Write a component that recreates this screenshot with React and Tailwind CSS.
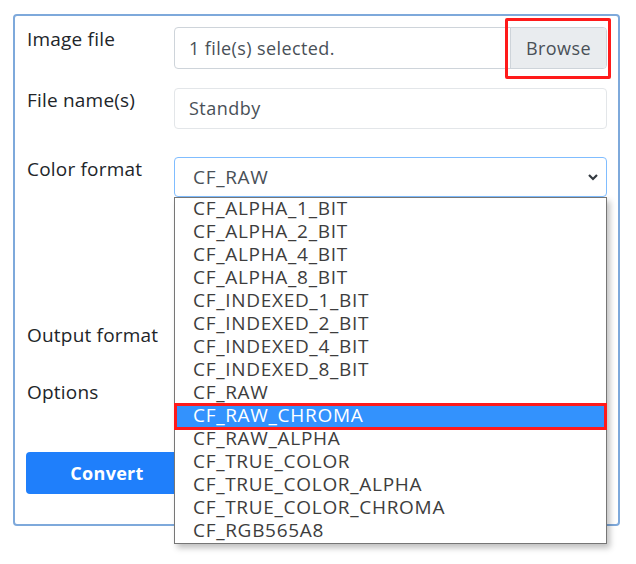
import React from "react";

const items = [
  "CF_ALPHA_1_BIT",
  "CF_ALPHA_2_BIT",
  "CF_ALPHA_4_BIT",
  "CF_ALPHA_8_BIT",
  "CF_INDEXED_1_BIT",
  "CF_INDEXED_2_BIT",
  "CF_INDEXED_4_BIT",
  "CF_INDEXED_8_BIT",
  "CF_RAW",
  "CF_RAW_CHROMA",
  "CF_RAW_ALPHA",
  "CF_TRUE_COLOR",
  "CF_TRUE_COLOR_ALPHA",
  "CF_TRUE_COLOR_CHROMA",
  "CF_RGB565A8",
];

export default function App() {
  return (
    <div className="w-[636px] h-[564px] bg-white pt-[14px] pl-[13px]" style={{ fontFamily: '"Open Sans", "Liberation Sans", sans-serif' }}>
      <div className="w-[607px] h-[512px] border-2 border-[#7ea9db] rounded-[4px] pl-[12px] pr-[11px] pt-[11px]">
        {/* Row 1 */}
        <div className="flex">
          <div className="w-[147px] text-[19px] leading-[24px] tracking-[0.2px] text-[#212529]">Image file</div>
          <div className="flex-1 flex h-[42px] border border-[#ced4da] rounded-[4px]">
            <div className="flex-1 flex items-center pl-[14px] text-[18px] tracking-[0.4px] text-[#495057]">1 file(s) selected.</div>
            <div className="relative w-[96px] flex items-center justify-center bg-[#e9ecef] border-l border-[#ced4da] rounded-r-[3px] text-[18px] tracking-[0.4px] text-[#495057]">
              Browse
              <div className="absolute -left-[6px] -top-[10px] -right-[5px] -bottom-[11px] border-[3px] border-[#ff1a1a] rounded-[2px]" />
            </div>
          </div>
        </div>
        {/* Row 2 */}
        <div className="flex mt-[19px]">
          <div className="w-[147px] text-[19px] leading-[24px] tracking-[0.2px] text-[#212529]">File name(s)</div>
          <div className="flex-1 flex items-center h-[41px] border border-[#e3e6e9] rounded-[4px] pl-[14px] text-[18px] tracking-[0.5px] text-[#495057]">Standby</div>
        </div>
        {/* Row 3 */}
        <div className="flex mt-[28px]">
          <div className="w-[147px] text-[19px] leading-[24px] tracking-[0.2px] text-[#212529]">Color format</div>
          <div className="relative flex-1">
            <div className="flex items-center justify-between h-[40px] border border-[#80bdff] rounded-[4px] pl-[18px] pr-[6px] text-[19px] tracking-[0.7px] text-[#495057]">
              <span>CF_RAW</span>
              <svg width="12" height="8" viewBox="0 0 12 8" className="mr-[1px]">
                <path d="M2 2 L6 6 L10 2" stroke="#343a40" strokeWidth="2.2" fill="none" />
              </svg>
            </div>
            <div className="absolute left-0 right-0 top-[40px] z-10 bg-white border border-[#767676] shadow-[3px_4px_6px_rgba(0,0,0,0.25)]">
              {items.map((it) =>
                it === "CF_RAW_CHROMA" ? (
                  <div key={it} className="relative h-[23px] pl-[18px] bg-[#3392fd] text-white text-[19px] tracking-[0.7px]">
                    <span className="block leading-[23px] relative -top-px">{it}</span>
                    <div className="absolute -left-px -right-px -top-[2px] -bottom-[2px] border-[3px] border-[#ff1a1a]" />
                  </div>
                ) : (
                  <div key={it} className="h-[23px] pl-[18px] text-[#3d3d3d] text-[19px] tracking-[0.7px]">
                    <span className="block leading-[23px] relative -top-px">{it}</span>
                  </div>
                )
              )}
            </div>
          </div>
        </div>
        {/* Output format */}
        <div className="mt-[126px] text-[19px] leading-[24px] tracking-[0.2px] text-[#212529]">Output format</div>
        <div className="mt-[33px] text-[19px] leading-[24px] tracking-[0.2px] text-[#212529]">Options</div>
        <button className="mt-[48px] -ml-px w-[162px] h-[42px] rounded-[4px] bg-[#1f7ffb] text-white text-[18px] tracking-[0.3px] font-bold flex items-center justify-center">
          Convert
        </button>
      </div>
    </div>
  );
}
